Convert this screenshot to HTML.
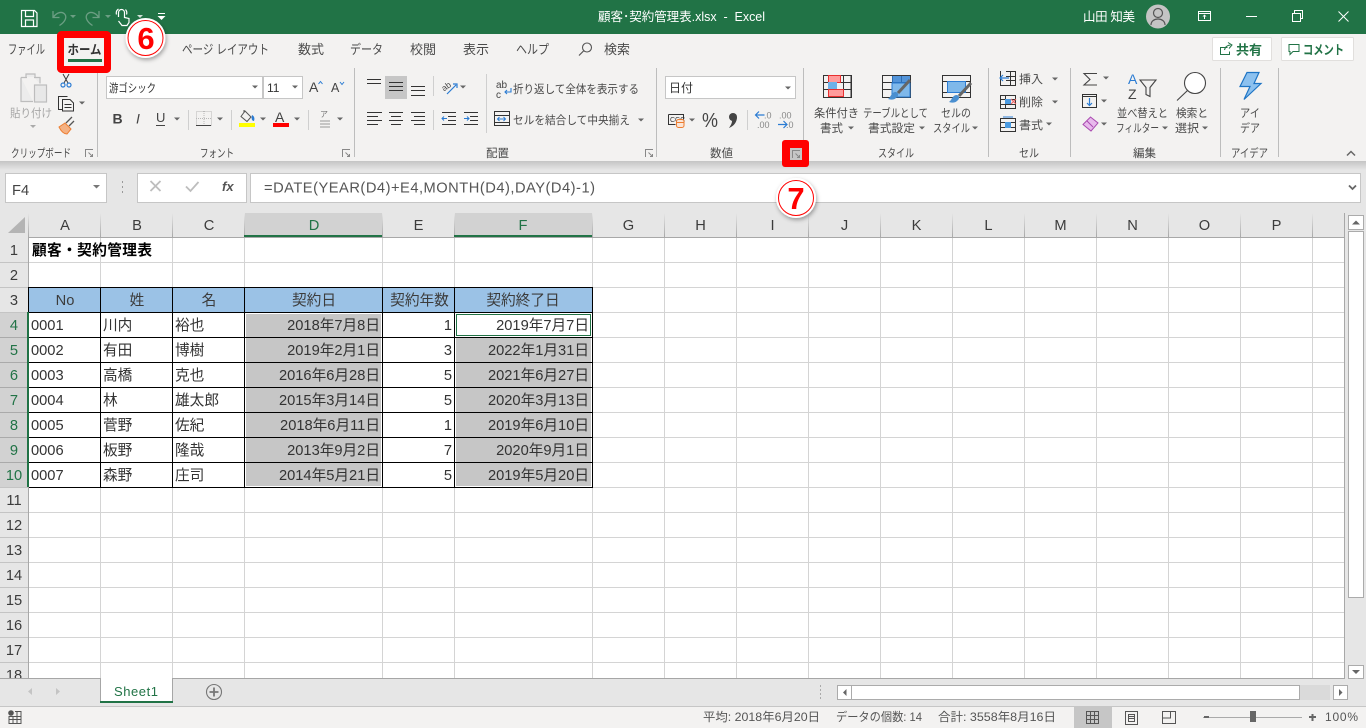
<!DOCTYPE html>
<html lang="ja"><head><meta charset="utf-8"><title>顧客･契約管理表.xlsx - Excel</title>
<style>
html,body{margin:0;padding:0;background:#e6e6e6;overflow:hidden;width:1366px;height:728px}
svg{display:block}
text{font-family:"Liberation Sans","Noto Sans CJK JP",sans-serif;white-space:pre}
.t{font-size:11.5px;fill:#4a4a4a}
.tab{font-size:13px;fill:#4a4a4a}
.c{font-size:14.67px;fill:#333}
.m{text-anchor:middle}
.e{text-anchor:end}
.h{font-size:14.67px;fill:#3c3c3c;text-anchor:middle}
.g{fill:#217346}
.s{font-size:12px;fill:#555}
.ln{shape-rendering:crispEdges;fill:none}
</style></head><body>
<svg width="1366" height="728" viewBox="0 0 1366 728" xmlns="http://www.w3.org/2000/svg">
<defs>
<path id="a" d="M-3 -1.5h6l-3 3z" fill="#666"/>
<g id="l" fill="none" stroke="#888"><path d="M4 -3.5H-3.5V4"/><path d="M-.5 -.5L3.5 3.5M1 3.5h2.5V1"/></g>
<linearGradient id="sep" gradientUnits="userSpaceOnUse" x1="0" y1="213" x2="0" y2="237"><stop offset="0" stop-color="#e6e6e6"/><stop offset="1" stop-color="#a8a8a8"/></linearGradient>
<linearGradient id="shd" x1="0" y1="0" x2="0" y2="1"><stop offset="0" stop-color="#c4c4c4"/><stop offset="1" stop-color="#e6e6e6"/></linearGradient>
<filter id="ds" x="-30%" y="-30%" width="170%" height="170%"><feDropShadow dx="1" dy="2" stdDeviation="2" flood-color="#000" flood-opacity=".35"/></filter>
</defs>

<!-- backgrounds -->
<rect width="1366" height="728" fill="#e6e6e6"/>
<rect width="1366" height="34" fill="#217346"/>
<rect y="34" width="1366" height="127" fill="#f3f2f1"/>
<rect y="161" width="1366" height="9" fill="url(#shd)"/>

<!-- title bar -->
<g fill="none" stroke="#fff" stroke-width="1.2">
<path d="M21.5 10.5h13l2.5 2.5v13.5h-15.5z"/><path d="M25.5 10.5v6h8v-6M25.5 26.5v-6.5h8v6.5"/>
<path d="M118.5 17v-4.5a3 3 0 0 1 6 0v5l4.500 1v4l-2 3h-5l-3.500 -4.500M116.500 14.500a5 5 0 0 1 2 -5.500M126.500 14.500a5 5 0 0 0 -1 -5"/>
</g>
<g fill="none" stroke="#6b9e83" stroke-width="1.3">
<path d="M53 11v6.500h6.500M53.500 17c3.500 -5 9 -6 11.500 -2.500c2 3 0 7.500 -5.500 11"/>
<path d="M99 11v6.500h-6.500M98.500 17c-3.500 -5 -9 -6 -11.500 -2.500c-2 3 0 7.500 5.500 11"/>
</g>
<path d="M70 15h6l-3 3zM105 15h6l-3 3z" fill="#6b9e83"/>
<path d="M137 15h6l-3 3z" fill="#cfe0d6"/>
<path d="M158 13.500h7" stroke="#fff" fill="none"/><path d="M157.500 16h8l-4 4z" fill="#fff"/>
<text x="598" y="21" font-size="12.5" fill="#fff" textLength="167" lengthAdjust="spacing">顧客･契約管理表.xlsx  -  Excel</text>
<text x="1083" y="21" font-size="12.5" fill="#fff" textLength="52" lengthAdjust="spacing">山田 知美</text>
<circle cx="1158" cy="16.5" r="12" fill="#c4c4c4"/>
<circle cx="1158" cy="13" r="4.5" fill="none" stroke="#555" stroke-width="1.2"/>
<path d="M1151 25c0 -8 14 -8 14 0" fill="none" stroke="#555" stroke-width="1.2"/>
<g fill="none" stroke="#fff" class="ln">
<path d="M1198.500 11.500h12v9h-12zM1198.500 13.500h12"/><path d="M1204.500 19v-4"/>
<path d="M1246 16.500h11"/>
<path d="M1292.500 13.500h8v8h-8zM1294.500 13v-2.500h8v8h-2"/>
</g>
<path d="M1338.500 11.500l10 10M1348.500 11.500l-10 10" stroke="#fff" fill="none"/>
<path d="M1202.500 16.500l2 -2l2 2z" fill="#fff"/>

<!-- tabs -->
<text class="tab" x="8" y="54" textLength="37" lengthAdjust="spacingAndGlyphs">ファイル</text>
<text class="tab" x="182" y="54" textLength="87" lengthAdjust="spacingAndGlyphs">ページ レイアウト</text>
<text class="tab" x="298" y="54">数式</text>
<text class="tab" x="350" y="54" textLength="33" lengthAdjust="spacingAndGlyphs">データ</text>
<text class="tab" x="410" y="54">校閲</text>
<text class="tab" x="463" y="54">表示</text>
<text class="tab" x="516" y="54" textLength="33" lengthAdjust="spacingAndGlyphs">ヘルプ</text>
<circle cx="587" cy="47.5" r="4.5" fill="none" stroke="#555" stroke-width="1.1"/><path d="M583.500 51l-4.500 4.500" stroke="#555" stroke-width="1.2"/>
<text class="tab" x="604" y="54">検索</text>

<!-- share / comment -->
<rect x="1212.500" y="37.500" width="59" height="23" rx="1" fill="#fff" stroke="#e1dfdd"/>
<rect x="1281.500" y="37.500" width="72" height="23" rx="1" fill="#fff" stroke="#e1dfdd"/>
<path d="M1227.500 47.500h-7v7h9v-3M1224.500 50c.5 -3 3 -5 6 -5M1228 42.500l4 2.500l-3 3.500" fill="none" stroke="#217346"/>
<text x="1236" y="54.5" font-size="13" font-weight="bold" fill="#217346">共有</text>
<path d="M1289 44.500h10v7h-6l-3 3v-3h-1z" fill="none" stroke="#217346"/>
<text x="1303" y="54.5" font-size="13" font-weight="bold" fill="#217346" textLength="41" lengthAdjust="spacingAndGlyphs">コメント</text>

<!-- group dividers -->
<path class="ln" stroke="#bdbdbd" d="M97.500 68V157M354.500 68V157M656.500 68V157M803.500 68V157M988.500 68V157M1070.500 68V157M1220.500 68V157M1278.500 68V157"/>
<path class="ln" stroke="#cfcfcf" d="M188.500 110V130M231.500 110V130M308.500 110V130M433.500 76V96M433.500 110V130M486.500 74V133M747.500 110V130"/>

<!-- clipboard -->
<g fill="none" stroke="#bdbdbd" stroke-width="1.2">
<path d="M21 77.500h6M34 77.500h6v6M21 77.500v24h12" fill="#ececec"/>
<path d="M26 77v-3h9v3" fill="#ececec"/><rect x="34.500" y="85" width="12" height="17" fill="#e8e8e8"/>
</g>
<text class="t" x="10" y="117" style="fill:#a6a6a6" textLength="42" lengthAdjust="spacingAndGlyphs">貼り付け</text>
<path d="M30 125h6l-3 3z" fill="#aaa"/>
<g fill="none" stroke="#3c3c3c"><path d="M63 74l5 9M69 74l-5 9"/></g>
<g fill="none" stroke="#2b7cd3" stroke-width="1.2"><circle cx="63" cy="85" r="2"/><circle cx="69" cy="85" r="2"/></g>
<path d="M67.500 96.500h-9v13h4M62.500 99.500h7.500l3.500 3.500v8h-11zM64.500 104.500h7M64.500 107.500h7" fill="none" stroke="#333"/><use href="#a" x="82" y="103"/>
<path d="M59 127l6 -4l6 6l-4 5c-3 0 -6 -3 -8 -7z" fill="#f4b183" stroke="#ed7d31"/><path d="M66 123l6 -6M69 126l5 -5" stroke="#555" stroke-width="1.3" fill="none"/>
<text class="t" x="11" y="157" textLength="60" lengthAdjust="spacingAndGlyphs">クリップボード</text>
<use href="#l" x="89" y="153"/>

<!-- font -->
<rect x="106.500" y="76.500" width="156" height="22" fill="#fff" stroke="#c6c6c6"/>
<rect x="263.500" y="76.500" width="39" height="22" fill="#fff" stroke="#c6c6c6"/>
<text x="109" y="92" font-size="11.5" fill="#333" textLength="47" lengthAdjust="spacingAndGlyphs">游ゴシック</text>
<text x="267" y="92" font-size="12" fill="#333">11</text>
<use href="#a" x="255" y="87"/><use href="#a" x="295" y="87"/>
<text x="309" y="92" font-size="14" fill="#444">A</text><path d="M318.500 84l2 -2.500l2 2.500" fill="none" stroke="#2b7cd3"/>
<text x="331" y="92" font-size="12.5" fill="#444">A</text><path d="M340 82l2 2.500l2 -2.500" fill="none" stroke="#2b7cd3"/>
<text x="112.500" y="123.500" font-size="14" font-weight="bold" fill="#444">B</text>
<text x="136" y="123.500" font-size="14" font-style="italic" fill="#444" font-family="Liberation Serif">I</text>
<text x="156" y="122" font-size="13" fill="#444">U</text><path d="M156 125.500h9" stroke="#444"/>
<use href="#a" x="177" y="119"/>
<path class="ln" stroke="#b8b8b8" stroke-dasharray="1 1" d="M196.500 111.500h15v14h-15zM204 111v14M196 118.500h15"/><path class="ln" stroke="#444" d="M196 125.500h15"/>
<use href="#a" x="220" y="119"/>
<path d="M245 111l6 6l-4 4.500l-6 -5zM244 113v-3" fill="none" stroke="#555"/><path d="M252 115c2 1 3 3 2 6c-2 0 -3 -2 -2 -6z" fill="#2b7cd3"/>
<rect x="239" y="123" width="16" height="4" fill="#ff0"/><use href="#a" x="263" y="119"/>
<text x="275" y="122" font-size="14" fill="#444">A</text><rect x="273" y="123" width="16" height="4" fill="#f00"/><use href="#a" x="297" y="119"/>
<text x="320" y="117" font-size="8" fill="#777">ア</text><path d="M320 121h10M320 124h10M320 127h10" stroke="#999"/><use href="#a" x="340" y="119"/>
<text class="t" x="200" y="157" textLength="34" lengthAdjust="spacingAndGlyphs">フォント</text>
<use href="#l" x="346" y="153"/>

<!-- alignment -->
<rect x="385" y="76" width="22" height="23" fill="#c6c6c6"/>
<path class="ln" stroke="#333" d="M367 79.500h14M367 83.500h14M367 87.500h0M389 82.500h14M389 86.500h14M389 90.500h14M411 86.500h14M411 90.500h14M411 95.500h14
M367 112.500h15M367 116.500h11M367 120.500h15M367 124.500h11
M389 112.500h14M391 116.500h10M389 120.500h14M391 124.500h10
M411 112.500h14M414 116.500h11M411 120.500h14M414 124.500h11
M448 116.500h8M448 120.500h8M442 124.500h14M464 124.500h14M464 112.500h14M442 112.500h14M470 116.500h8M470 120.500h8"/>
<path d="M442 118.500h5M444 116.500l-2 2l2 2M464 118.500h5M467 116.500l2 2l-2 2" fill="none" stroke="#2b7cd3"/>
<text x="442" y="89" font-size="8.5" fill="#444" transform="rotate(-35 447 87)">ab</text><path d="M447 94l9 -9M453 84h4v4" fill="none" stroke="#2b7cd3" stroke-width="1.2"/><use href="#a" x="463" y="87"/>
<text x="496" y="88" font-size="10" fill="#444">ab</text><text x="496" y="98" font-size="10" fill="#444">c</text>
<path d="M511 88v4h-6M507 90l-2 2l2 2" fill="none" stroke="#2b7cd3" stroke-width="1.1"/>
<text class="t" x="513" y="93" textLength="126" lengthAdjust="spacingAndGlyphs">折り返して全体を表示する</text>
<path class="ln" stroke="#333" fill="none" d="M494.500 111.500h15v14h-15zM494 115.500h16M494 122.500h16"/><path d="M498 119h7M499.500 117l-2 2l2 2M503.500 117l2 2l-2 2" fill="none" stroke="#2b7cd3"/>
<text class="t" x="513" y="124" textLength="117" lengthAdjust="spacingAndGlyphs">セルを結合して中央揃え</text>
<use href="#a" x="641" y="120"/>
<text class="t" x="486" y="157">配置</text>
<use href="#l" x="649" y="153"/>

<!-- number -->
<rect x="665.500" y="76.500" width="130" height="22" fill="#fff" stroke="#c6c6c6"/>
<text x="669" y="92" font-size="12" fill="#333">日付</text><use href="#a" x="788" y="88"/>
<path d="M668.500 114.500h15v5M668.500 114.500v10h7" fill="none" stroke="#333"/><text x="670" y="122" font-size="7" fill="#333">CCC</text>
<rect x="676.500" y="119.500" width="7.5" height="8" rx="2" fill="#fbe5d6" stroke="#ed7d31"/><path d="M676.500 122.500h7.500" stroke="#ed7d31"/><use href="#a" x="692" y="120"/>
<text x="702" y="127" font-size="20" fill="#444" textLength="16" lengthAdjust="spacingAndGlyphs">%</text>
<circle cx="733" cy="117" r="4" fill="#444"/><path d="M737 117c0 5 -3 9 -8 11c2 -3 3 -5 3 -7z" fill="#444"/>
<text x="764" y="118.500" font-size="9" fill="#888">.0</text><text x="757" y="128" font-size="9" fill="#888">.00</text><path d="M755.500 115h9M759 111.500l-3.500 3.500l3.500 3.500" fill="none" stroke="#2b7cd3" stroke-width="1.2"/>
<text x="779" y="118.500" font-size="9" fill="#888">.00</text><text x="786" y="128" font-size="9" fill="#888">.0</text><path d="M778 124.500h9M783.500 121l3.500 3.500l-3.500 3.500" fill="none" stroke="#2b7cd3" stroke-width="1.2"/>
<text class="t" x="710" y="157">数値</text>

<!-- styles -->
<path class="ln" fill="none" stroke="#333" d="M823.500 75.500h28v22h-28zM823.500 82.500h28M823.500 89.500h28M833.500 75v22M843.500 75v22M851 75v22"/>
<path d="M828.500 75.500h12v7h-12zM828.500 89.500h15v7h-15z" fill="#ff9b9b" stroke="#e83030"/><rect x="828" y="82" width="9" height="7" fill="#6fb1e8"/>
<path class="ln" fill="none" stroke="#333" d="M882.500 75.500h28v22h-28zM882.500 82.500h28M882.500 89.500h28M892.500 75v22M901.500 75v22"/>
<rect x="892" y="83" width="18" height="14" fill="#7fb8ea" stroke="#2b7cd3"/><rect x="892" y="76" width="18" height="7" fill="#2b7cd3" opacity=".8"/>
<path d="M910 80l-12 13" stroke="#666" stroke-width="3" fill="none"/><path d="M895 92c4 0 4 4 1 6c-2 2 -5 2 -8 1c3 -2 3 -6 7 -7z" fill="#4a8fd0"/>
<path class="ln" fill="none" stroke="#333" d="M942.500 75.500h28v22h-28zM942.500 81.500h28M942.500 92.500h28"/>
<rect x="947.500" y="81.500" width="18" height="11" fill="#7fb8ea" stroke="#2b7cd3"/>
<path d="M971 83l-12 13" stroke="#666" stroke-width="3" fill="none"/><path d="M956 95c4 0 4 4 1 6c-2 2 -5 2 -8 1c3 -2 3 -6 7 -7z" fill="#4a8fd0"/>
<text class="t" x="814" y="117" textLength="45" lengthAdjust="spacingAndGlyphs">条件付き</text>
<text class="t" x="820" y="132">書式</text><use href="#a" x="851" y="128"/>
<text class="t" x="863" y="117" textLength="65" lengthAdjust="spacingAndGlyphs">テーブルとして</text>
<text class="t" x="868" y="132" textLength="47" lengthAdjust="spacingAndGlyphs">書式設定</text><use href="#a" x="922" y="128"/>
<text class="t" x="941" y="117" textLength="30" lengthAdjust="spacingAndGlyphs">セルの</text>
<text class="t" x="933" y="132" textLength="37" lengthAdjust="spacingAndGlyphs">スタイル</text><use href="#a" x="975" y="128"/>
<text class="t" x="878" y="157" textLength="36" lengthAdjust="spacingAndGlyphs">スタイル</text>
<rect x="782" y="140" width="27" height="27" rx="3" fill="#f00"/>
<rect x="790" y="148" width="12" height="12" fill="#c6c6c6"/><use href="#l" x="796" y="154"/>

<!-- cells -->
<path class="ln" fill="none" stroke="#333" d="M1000.500 71.500h15v14h-15zM1005.500 71v14M1010.500 71v14M1000 76.500h16M1000 80.500h16
M1000.500 95.500h15v13h-15zM1000 99.500h16M1000 104.500h16M1005.500 95v14
M1000.500 118.500h15v13h-15zM1000 122.500h16M1000 127.500h16"/>
<rect x="1001" y="71" width="5" height="14" fill="#f3f2f1"/><path d="M1009 78h-9M1003 75l-3 3l3 3" fill="none" stroke="#2b7cd3" stroke-width="1.2"/>
<rect x="1005" y="99" width="6" height="5" fill="#4a9ae0"/><path d="M1011 99l5 5M1016 99l-5 5" stroke="#f06060" fill="none"/>
<rect x="1005" y="122" width="6" height="6" fill="#4a9ae0"/><path d="M1003 117h10" stroke="#2b7cd3"/>
<text class="t" x="1019" y="83" textLength="24" lengthAdjust="spacingAndGlyphs">挿入</text><use href="#a" x="1055" y="79"/>
<text class="t" x="1019" y="106" textLength="24" lengthAdjust="spacingAndGlyphs">削除</text><use href="#a" x="1055" y="102"/>
<text class="t" x="1019" y="129" textLength="24" lengthAdjust="spacingAndGlyphs">書式</text><use href="#a" x="1049" y="124"/>
<text class="t" x="1019" y="157" textLength="20" lengthAdjust="spacingAndGlyphs">セル</text>

<!-- editing -->
<path d="M1097 73.500h-13l6 6l-6 5.500h13" fill="none" stroke="#444" stroke-width="1.1"/><use href="#a" x="1106" y="78"/>
<rect x="1082.500" y="94.500" width="14" height="13" fill="none" stroke="#333"/><path class="ln" d="M1082 96.500h15" stroke="#333"/><path d="M1089.500 98v7M1087 103l2.500 2.500l2.500 -2.500" fill="none" stroke="#2b7cd3" stroke-width="1.2"/><use href="#a" x="1104" y="101"/>
<path d="M1083 124.500l7.500 -7.500l7.500 6l-7 8z" fill="#e8b9ec" stroke="#a94ab0"/><path d="M1087 121l6 6" stroke="#a94ab0"/><use href="#a" x="1104" y="124"/>
<text x="1128" y="84" font-size="14" fill="#2b7cd3">A</text>
<text x="1128" y="99" font-size="14" fill="#444">Z</text>
<path d="M1140 80h16l-6 7.500v9l-4 -2v-7z" fill="none" stroke="#444" stroke-width="1.1"/>
<text class="t" x="1117" y="117" textLength="51" lengthAdjust="spacingAndGlyphs">並べ替えと</text>
<text class="t" x="1116" y="132" textLength="43" lengthAdjust="spacingAndGlyphs">フィルター</text><use href="#a" x="1165" y="128"/>
<circle cx="1195" cy="83" r="10.5" fill="#fff" stroke="#444" stroke-width="1.1"/><path d="M1187.500 90.500l-10.500 10" stroke="#444" stroke-width="1.1" fill="none"/>
<text class="t" x="1176" y="117" textLength="32" lengthAdjust="spacingAndGlyphs">検索と</text>
<text class="t" x="1175" y="132" textLength="24" lengthAdjust="spacingAndGlyphs">選択</text><use href="#a" x="1205" y="128"/>
<text class="t" x="1133" y="157">編集</text>

<!-- ideas -->
<path d="M1247 72.500h12l-5 11h7l-17 16l6 -13h-10z" fill="#8cc1ef" stroke="#1e74c4" stroke-width="1.2"/>
<text class="t" x="1240" y="117" textLength="20" lengthAdjust="spacingAndGlyphs">アイ</text>
<text class="t" x="1240" y="132" textLength="20" lengthAdjust="spacingAndGlyphs">デア</text>
<text class="t" x="1231" y="157" textLength="37" lengthAdjust="spacingAndGlyphs">アイデア</text>
<path d="M1347 155.500l4 -4l4 4" fill="none" stroke="#666" stroke-width="1.5"/>

<!-- red tab highlight -->
<rect x="60.500" y="34.500" width="47" height="35" rx="1" fill="#f3f2f1" stroke="#f00" stroke-width="7"/>
<rect x="58" y="32" width="52" height="40" rx="4" fill="none" stroke="#f00" stroke-width="2"/>
<text x="67.500" y="54" font-size="12.5" font-weight="bold" fill="#333" textLength="34" lengthAdjust="spacingAndGlyphs">ホーム</text>
<rect x="68" y="59" width="34" height="3" fill="#217346"/>

<!-- formula bar -->
<rect x="5.500" y="173.500" width="101" height="29" fill="#fff" stroke="#c6c6c6"/>
<rect x="137.500" y="173.500" width="109" height="29" fill="#fff" stroke="#c6c6c6"/>
<rect x="250.500" y="173.500" width="1110" height="29" fill="#fff" stroke="#c6c6c6"/>
<text x="12" y="195" font-size="14.67" fill="#444">F4</text>
<path d="M93 185h7l-3.500 3.500z" fill="#777"/>
<path d="M122 182h1M122 187h1M122 192h1" stroke="#999" stroke-width="2"/>
<path d="M150.500 181l10 10M160.500 181l-10 10" stroke="#bdbdbd" stroke-width="1.8" fill="none"/>
<path d="M186 186.500l4.500 4.500l8 -9" stroke="#bdbdbd" stroke-width="1.8" fill="none"/>
<text x="222" y="191" font-size="13" font-style="italic" font-weight="bold" fill="#555" font-family="Liberation Serif">fx</text>
<text x="264" y="192.500" font-size="14.67" fill="#555" textLength="331" lengthAdjust="spacing">=DATE(YEAR(D4)+E4,MONTH(D4),DAY(D4)-1)</text>
<path d="M1349 185.500l3.500 3.500l3.500 -3.500" fill="none" stroke="#666" stroke-width="1.8"/>

<!-- headers background -->
<rect y="213" width="1345" height="24" fill="#e6e6e6"/>
<rect y="237" width="28" height="441" fill="#e6e6e6"/>
<rect x="244" y="213" width="138" height="24" fill="#d2d2d2"/>
<rect x="454" y="213" width="138" height="24" fill="#d2d2d2"/>
<rect y="312" width="28" height="175" fill="#d2d2d2"/>
<path d="M8 233h17v-16z" fill="#b4b4b4"/>
<!-- sheet -->
<rect x="29" y="238" width="1316" height="440" fill="#fff"/>
<path class="ln" stroke="#d4d4d4" d="M100.500 237V678M172.500 237V678M244.500 237V678M382.500 237V678M454.500 237V678M592.500 237V678M664.500 237V678M736.500 237V678M808.500 237V678M880.500 237V678M952.500 237V678M1024.500 237V678M1096.500 237V678M1168.500 237V678M1240.500 237V678M1312.500 237V678
M29 262.500H1345M29 287.500H1345M29 312.500H1345M29 337.500H1345M29 362.500H1345M29 387.500H1345M29 412.500H1345M29 437.500H1345M29 462.500H1345M29 487.500H1345M29 512.500H1345M29 537.500H1345M29 562.500H1345M29 587.500H1345M29 612.500H1345M29 637.500H1345M29 662.500H1345"/>
<path class="ln" stroke="#c4c4c4" d="M0 262.500H28M0 287.500H28M0 312.500H28M0 487.500H28M0 512.500H28M0 537.500H28M0 562.500H28M0 587.500H28M0 612.500H28M0 637.500H28M0 662.500H28"/>
<path class="ln" stroke="#aaa" d="M0 337.500H28M0 362.500H28M0 387.500H28M0 412.500H28M0 437.500H28M0 462.500H28"/>
<path d="M28 213h1v24h-1zM100 213h1v24h-1zM172 213h1v24h-1zM244 213h1v24h-1zM382 213h1v24h-1zM454 213h1v24h-1zM592 213h1v24h-1zM664 213h1v24h-1zM736 213h1v24h-1zM808 213h1v24h-1zM880 213h1v24h-1zM952 213h1v24h-1zM1024 213h1v24h-1zM1096 213h1v24h-1zM1168 213h1v24h-1zM1240 213h1v24h-1zM1312 213h1v24h-1z" fill="url(#sep)"/>
<path class="ln" stroke="#a8a8a8" d="M28 237.500H1345M28.500 237V678M1344.500 213V678"/>
<path class="ln" stroke="#217346" stroke-width="2" d="M244 236H382M454 236H592M28 312V487"/>

<text class="h" x="65" y="230">A</text><text class="h" x="137" y="230">B</text><text class="h" x="209" y="230">C</text>
<text class="h" x="314" y="230" style="fill:#217346">D</text><text class="h" x="418.500" y="230">E</text><text class="h" x="523" y="230" style="fill:#217346">F</text>
<text class="h" x="628.500" y="230">G</text><text class="h" x="700.500" y="230">H</text><text class="h" x="772.500" y="230">I</text><text class="h" x="844.500" y="230">J</text><text class="h" x="916.500" y="230">K</text><text class="h" x="988.500" y="230">L</text><text class="h" x="1060.500" y="230">M</text><text class="h" x="1132.500" y="230">N</text><text class="h" x="1204.500" y="230">O</text><text class="h" x="1276.500" y="230">P</text>

<text class="h" x="14" y="255">1</text><text class="h" x="14" y="280">2</text><text class="h" x="14" y="305">3</text>
<text class="h" x="14" y="330" style="fill:#217346">4</text><text class="h" x="14" y="355" style="fill:#217346">5</text><text class="h" x="14" y="380" style="fill:#217346">6</text><text class="h" x="14" y="405" style="fill:#217346">7</text><text class="h" x="14" y="430" style="fill:#217346">8</text><text class="h" x="14" y="455" style="fill:#217346">9</text><text class="h" x="14" y="480" style="fill:#217346">10</text>
<text class="h" x="14" y="505">11</text><text class="h" x="14" y="530">12</text><text class="h" x="14" y="555">13</text><text class="h" x="14" y="580">14</text><text class="h" x="14" y="605">15</text><text class="h" x="14" y="630">16</text><text class="h" x="14" y="655">17</text>
<svg x="0" y="663" width="28" height="15"><text class="h" x="14" y="17">18</text></svg>

<!-- table fill -->
<rect x="29" y="288" width="563" height="24" fill="#9bc2e6"/>
<rect x="246" y="314" width="135" height="172" fill="#c6c6c6"/>
<rect x="456" y="338" width="135" height="148" fill="#c6c6c6"/>
<path class="ln" stroke="#000" d="M29 287.500H592.500M29 312.500H592.500M29 337.500H592.500M29 362.500H592.500M29 387.500H592.500M29 412.500H592.500M29 437.500H592.500M29 462.500H592.500M29 487.500H592.500M100.500 287V488M172.500 287V488M244.500 287V488M382.500 287V488M454.500 287V488M592.500 287V488M28.500 287V312"/>
<rect x="456.500" y="314.500" width="134" height="21" fill="#fff" stroke="#217346"/>

<text x="32" y="255" font-size="14.67" font-weight="bold" fill="#000" textLength="120" lengthAdjust="spacing">顧客・契約管理表</text>

<text class="h" x="65" y="305">No</text><text class="h" x="137" y="305">姓</text><text class="h" x="209" y="305">名</text>
<text class="h" x="314" y="305">契約日</text><text class="h" x="419.500" y="305">契約年数</text><text class="h" x="523" y="305">契約終了日</text>

<g class="r">
<text class="c" x="31" y="330">0001</text><text class="c" x="103" y="330">川内</text><text class="c" x="175" y="330">裕也</text><text class="c e" x="380" y="330">2018年7月8日</text><text class="c e" x="452" y="330">1</text><text class="c e" x="589" y="330">2019年7月7日</text>
<text class="c" x="31" y="355">0002</text><text class="c" x="103" y="355">有田</text><text class="c" x="175" y="355">博樹</text><text class="c e" x="380" y="355">2019年2月1日</text><text class="c e" x="452" y="355">3</text><text class="c e" x="589" y="355">2022年1月31日</text>
<text class="c" x="31" y="380">0003</text><text class="c" x="103" y="380">高橋</text><text class="c" x="175" y="380">克也</text><text class="c e" x="380" y="380">2016年6月28日</text><text class="c e" x="452" y="380">5</text><text class="c e" x="589" y="380">2021年6月27日</text>
<text class="c" x="31" y="405">0004</text><text class="c" x="103" y="405">林</text><text class="c" x="175" y="405">雄太郎</text><text class="c e" x="380" y="405">2015年3月14日</text><text class="c e" x="452" y="405">5</text><text class="c e" x="589" y="405">2020年3月13日</text>
<text class="c" x="31" y="430">0005</text><text class="c" x="103" y="430">菅野</text><text class="c" x="175" y="430">佐紀</text><text class="c e" x="380" y="430">2018年6月11日</text><text class="c e" x="452" y="430">1</text><text class="c e" x="589" y="430">2019年6月10日</text>
<text class="c" x="31" y="455">0006</text><text class="c" x="103" y="455">板野</text><text class="c" x="175" y="455">隆哉</text><text class="c e" x="380" y="455">2013年9月2日</text><text class="c e" x="452" y="455">7</text><text class="c e" x="589" y="455">2020年9月1日</text>
<text class="c" x="31" y="480">0007</text><text class="c" x="103" y="480">森野</text><text class="c" x="175" y="480">庄司</text><text class="c e" x="380" y="480">2014年5月21日</text><text class="c e" x="452" y="480">5</text><text class="c e" x="589" y="480">2019年5月20日</text>
</g>

<!-- vertical scrollbar -->
<rect x="1345" y="213" width="21" height="466" fill="#e6e6e6"/>
<rect x="1348.500" y="215.500" width="15" height="14" fill="#fff" stroke="#ababab"/>
<path d="M1352 224.500h8l-4 -4z" fill="#666"/>
<rect x="1348.500" y="231.500" width="15" height="366" fill="#fff" stroke="#ababab"/>
<rect x="1348.500" y="665.500" width="15" height="13" fill="#fff" stroke="#ababab"/>
<path d="M1352 670h8l-4 4z" fill="#666"/>

<!-- tab bar -->
<rect y="679" width="1366" height="27" fill="#e6e6e6"/>
<path class="ln" stroke="#a6a6a6" d="M0 678.500H1345"/>
<path d="M32 688v7l-4 -3.500zM56 688v7l4 -3.500z" fill="#c4c4c4"/>
<rect x="100" y="678" width="73" height="25" fill="#fff"/>
<path class="ln" stroke="#a6a6a6" d="M100.500 678V703M172.500 678V703"/>
<rect x="100" y="701" width="73" height="2" fill="#217346"/>
<text x="136" y="696" font-size="13" fill="#217346" text-anchor="middle" textLength="44" lengthAdjust="spacing">Sheet1</text>
<circle cx="214" cy="692" r="7.5" fill="none" stroke="#777" stroke-width="1.1"/><path d="M209.500 692h9M214 687.500v9" stroke="#777" stroke-width="1.8"/>
<path d="M820 686h1M820 690h1M820 694h1M820 698h1" stroke="#aaa" stroke-width="2"/>
<rect x="837" y="685" width="493" height="15" fill="#dadada"/>
<rect x="837.500" y="685.500" width="14" height="14" fill="#fff" stroke="#ababab"/>
<path d="M846.500 689v7l-3.500 -3.500z" fill="#666"/>
<rect x="851.500" y="685.500" width="448" height="14" fill="#fff" stroke="#ababab"/>
<rect x="1333.500" y="685.500" width="14" height="14" fill="#fff" stroke="#ababab"/>
<path d="M1339 689v7l3.500 -3.500z" fill="#666"/>

<!-- status bar -->
<rect y="706" width="1366" height="22" fill="#f3f2f1"/>
<path class="ln" stroke="#c6c6c6" d="M0 706.500H1366"/>
<circle cx="11" cy="713" r="2.8" fill="#555"/>
<path class="ln" d="M15 711.500h6v12h-12v-7h12M9 719.500h12M13 716v8M17 712v12" fill="none" stroke="#555"/>
<text class="s" x="703" y="721" textLength="117" lengthAdjust="spacingAndGlyphs">平均: 2018年6月20日</text>
<text class="s" x="836" y="721" textLength="86" lengthAdjust="spacingAndGlyphs">データの個数: 14</text>
<text class="s" x="938" y="721" textLength="118" lengthAdjust="spacingAndGlyphs">合計: 3558年8月16日</text>
<rect x="1074" y="706" width="38" height="22" fill="#c6c6c6"/>
<path class="ln" stroke="#555" fill="none" d="M1086.500 711.500h12v12h-12zM1090.500 711v13M1094.500 711v13M1086 715.500h13M1086 719.500h13"/>
<path class="ln" stroke="#555" fill="none" d="M1125.500 711.500h12v13h-12zM1128.500 714.500h6v7h-6zM1129 716.500h5M1129 718.500h5"/>
<path class="ln" stroke="#555" fill="none" d="M1162.500 711.500h13v12h-13zM1170.500 711v7h-8"/>
<path class="ln" stroke="#aaa" d="M1203 717.500h99"/>
<rect x="1250" y="711" width="6" height="11" fill="#666"/>
<path class="ln" stroke="#666" stroke-width="2" d="M1309 717h7M1312.500 714v7M1204 717h5"/>
<text class="s" x="1325" y="721" textLength="33" lengthAdjust="spacing">100%</text>

<!-- callouts -->
<g filter="url(#ds)"><circle cx="145.500" cy="38" r="20" fill="#fff"/></g>
<circle cx="145.500" cy="38" r="17.5" fill="#fff" stroke="#f00" stroke-width="1"/>
<text x="146" y="49" font-size="31" font-weight="bold" fill="#f00" text-anchor="middle">6</text>
<g filter="url(#ds)"><circle cx="796" cy="198" r="20" fill="#fff"/></g>
<circle cx="796" cy="198" r="17.5" fill="#fff" stroke="#f00" stroke-width="1"/>
<text x="796" y="209" font-size="31" font-weight="bold" fill="#f00" text-anchor="middle">7</text>
</svg>
</body></html>
